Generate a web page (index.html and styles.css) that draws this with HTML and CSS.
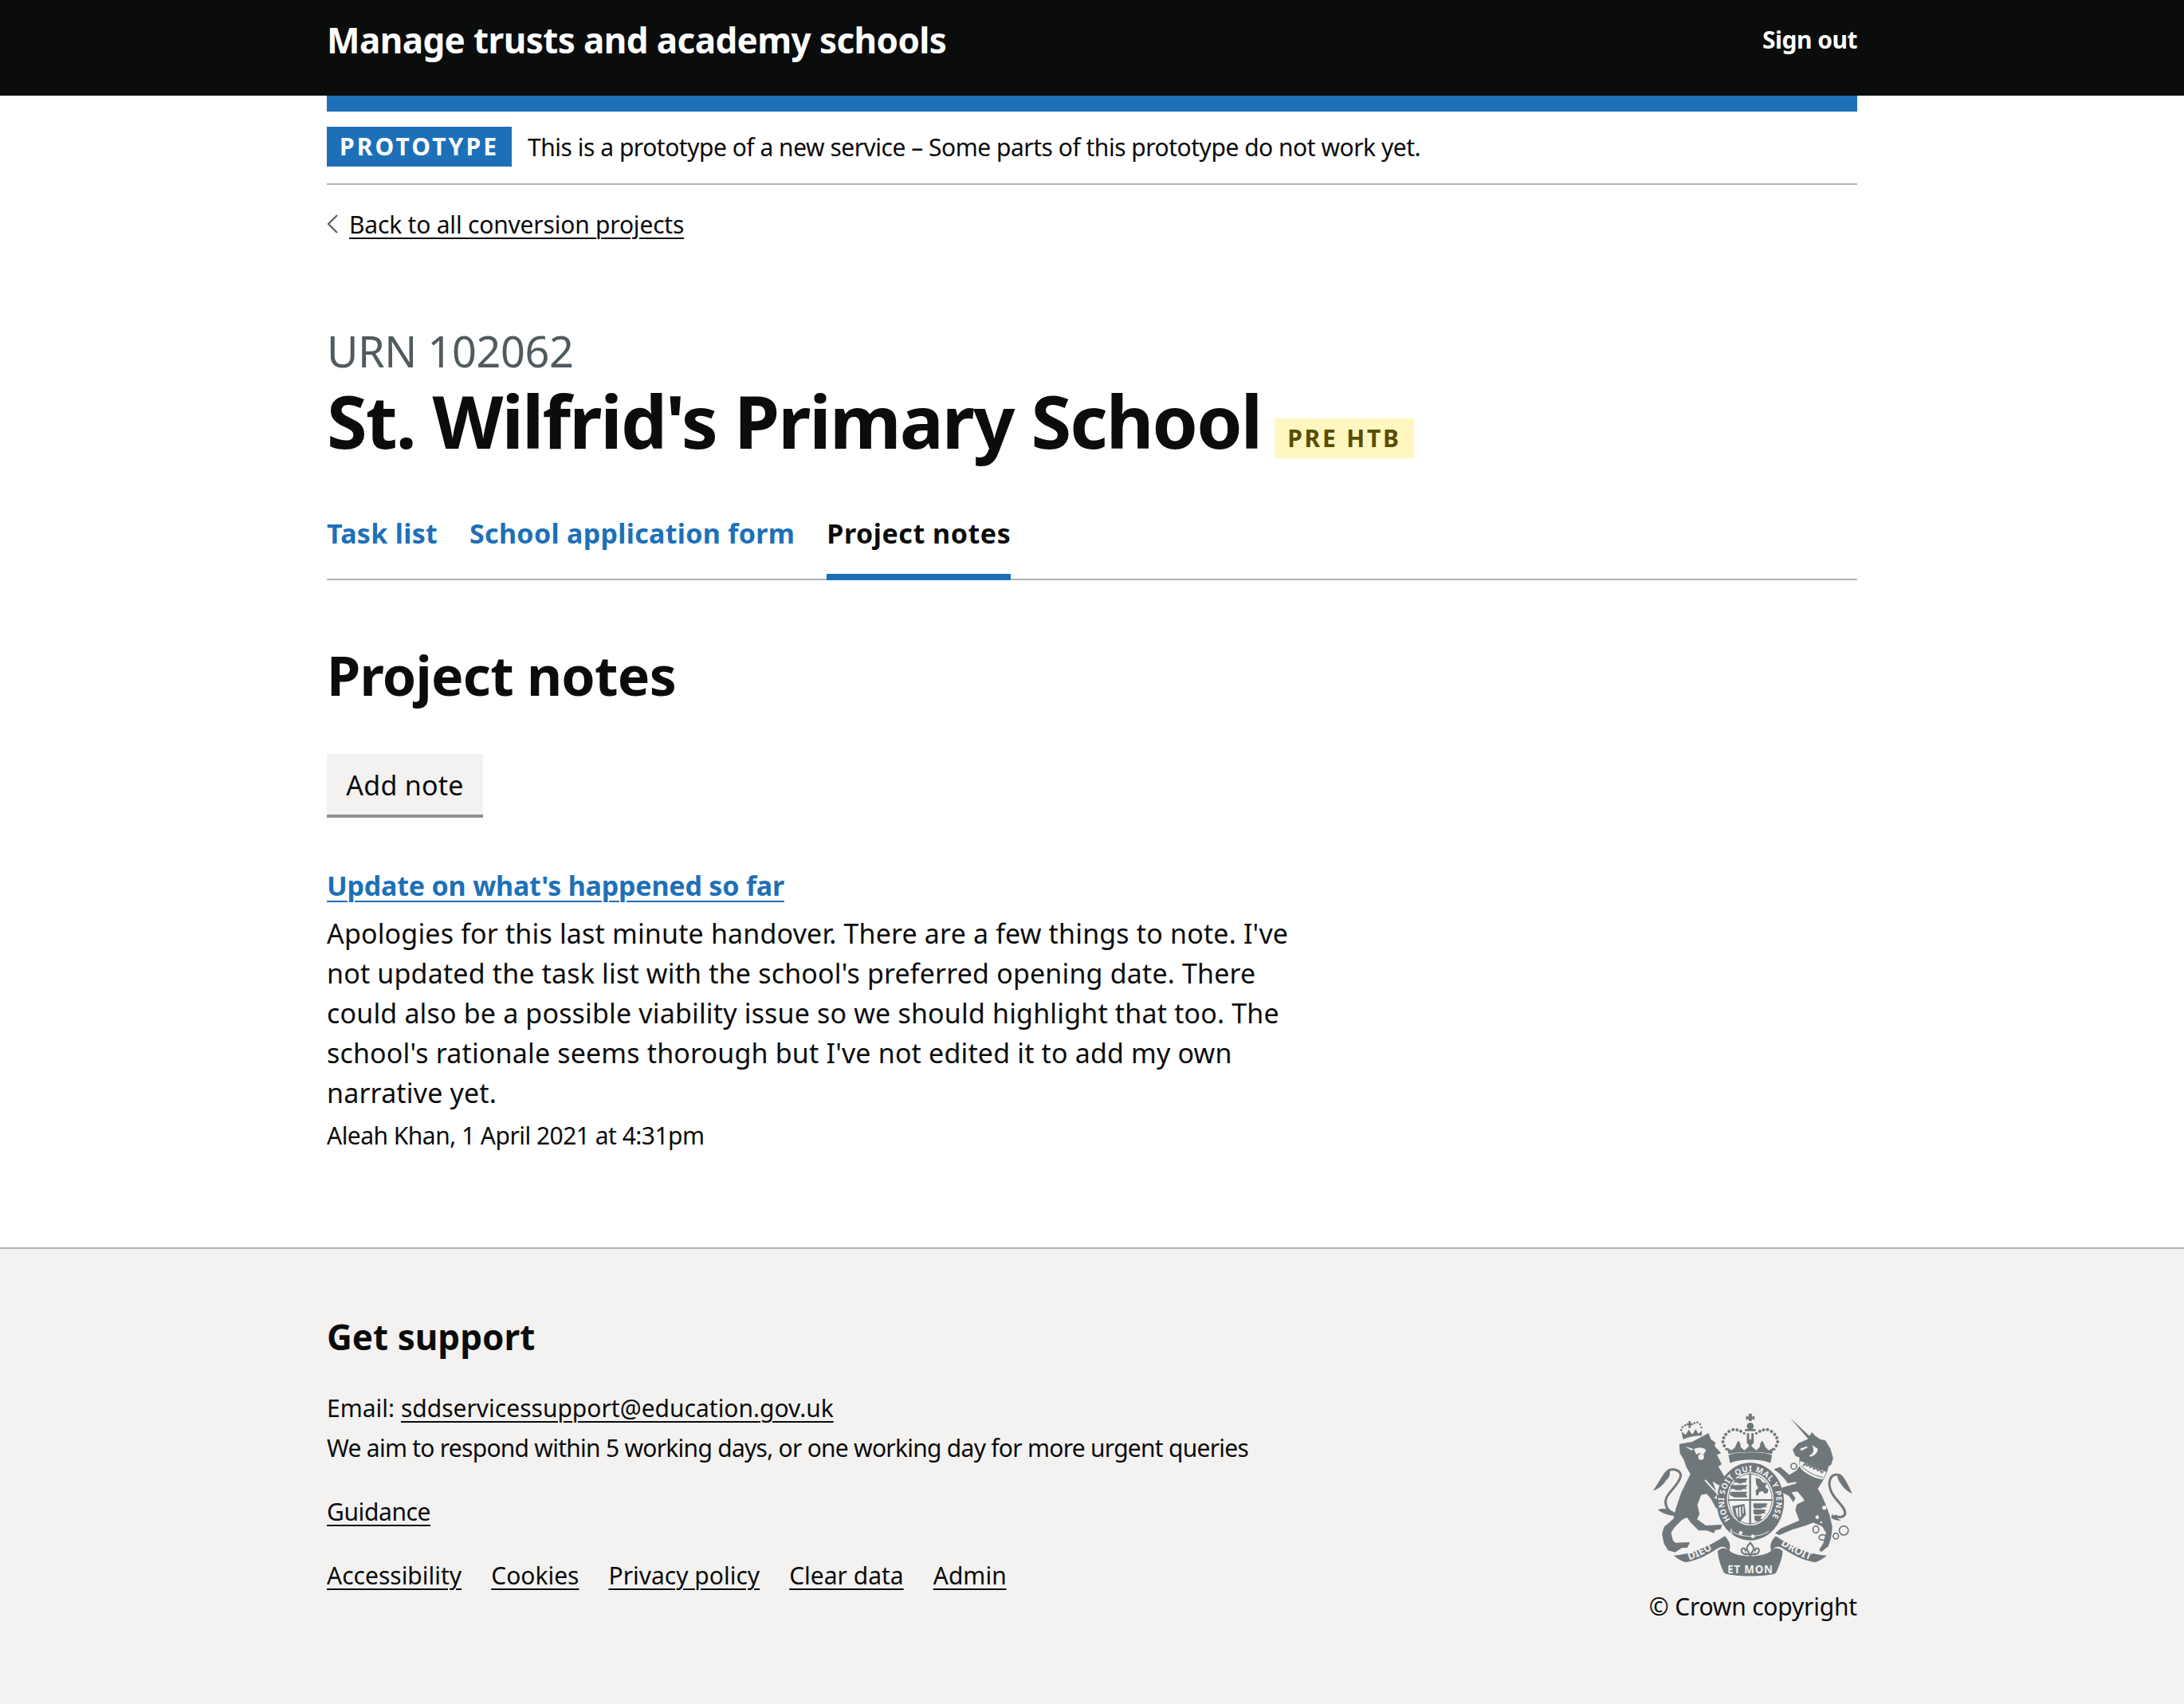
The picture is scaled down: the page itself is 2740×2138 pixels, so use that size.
FILE: index.html
```html
<!DOCTYPE html>
<html lang="en">
<head>
<meta charset="utf-8">
<title>Project notes</title>
<link rel="stylesheet" href="styles.css">
</head>
<body>
<header class="site-header">
  <div class="container header-inner">
    <a class="service-name" href="#">Manage trusts and academy schools</a>
    <a class="sign-out" href="#">Sign out</a>
  </div>
</header>
<div class="container">
  <div class="blue-bar"></div>
  <div class="phase-banner">
    <strong class="phase-tag">PROTOTYPE</strong>
    <span class="phase-text">This is a prototype of a new service – Some parts of this prototype do not work yet.</span>
  </div>
  <a class="back-link" href="#">
    <svg class="back-chevron" viewBox="0 0 14 24" width="14" height="24"><path d="M13 1 L2 12 L13 23" fill="none" stroke="#505a5f" stroke-width="2"/></svg>
    <span class="back-text">Back to all conversion projects</span>
  </a>
  <main>
    <p class="urn">URN 102062</p>
    <div class="title-row">
      <h1 class="school">St. Wilfrid's Primary School</h1>
      <strong class="stage-tag">PRE HTB</strong>
    </div>
    <nav class="tabs">
      <a class="tab" href="#">Task list</a>
      <a class="tab" href="#">School application form</a>
      <a class="tab tab-current" href="#">Project notes</a>
    </nav>
    <h2 class="section-title">Project notes</h2>
    <a class="button" href="#">Add note</a>
    <article class="note">
      <h3 class="note-title"><a href="#">Update on what's happened so far</a></h3>
      <p class="note-body">Apologies for this last minute handover. There are a few things to note. I've not updated the task list with the school's preferred opening date. There could also be a possible viability issue so we should highlight that too. The school's rationale seems thorough but I've not edited it to add my own narrative yet.</p>
      <p class="note-meta">Aleah Khan, 1 April 2021 at 4:31pm</p>
    </article>
  </main>
</div>
<footer class="footer">
  <div class="container footer-inner">
    <div class="footer-main">
      <h2 class="footer-title">Get support</h2>
      <p class="footer-line">Email: <a href="#">sddservicessupport@education.gov.uk</a></p>
      <p class="footer-line footer-line-tight">We aim to respond within 5 working days, or one working day for more urgent queries</p>
      <p class="footer-guidance"><a href="#">Guidance</a></p>
      <ul class="footer-links">
        <li><a href="#">Accessibility</a></li>
        <li><a href="#">Cookies</a></li>
        <li><a href="#">Privacy policy</a></li>
        <li><a href="#">Clear data</a></li>
        <li><a href="#">Admin</a></li>
      </ul>
    </div>
    <div class="footer-crest">
      <svg class="crest" viewBox="100 70 755 615" width="252" height="205" role="img" aria-label="Royal coat of arms">
        <g fill="#6f777b">
          <!-- royal crown -->
          <path d="M462 72h12v12l10-4v16l-10-4v8h-12v-8l-10 4v-16l10 4z"/>
          <path d="M468 106a13 13 0 0 1 0 26a13 13 0 0 1 0-26z"/>
          <path d="M448 130h40v8h-40z"/>
          <path d="M455 146h9v38h-9zM472 146h9v38h-9z"/>
          <path d="M386 228c20-8 50-10 82-10s62 2 82 10l-6 30c-20-8-46-10-76-10s-56 2-76 10z"/>
          <path d="M386 224l-6-24 18 10 12-10 12-26 12 26 12 10 22-20 22 20 12-10 12-26 12 26 12 10 18-10-6 24c-24-6-52-8-82-8s-58 2-82 8z"/>
          <path d="M468 166l12 16-12 18-12-18zM424 174l8 14-8 14-8-14zM512 174l8 14-8 14-8-14z"/>
          <circle cx="368" cy="163" r="6"/><circle cx="365" cy="178" r="6"/><circle cx="370" cy="193" r="6"/><circle cx="378" cy="206" r="5"/>
          <circle cx="376" cy="150" r="6"/><circle cx="388" cy="139" r="6"/><circle cx="403" cy="132" r="6"/><circle cx="418" cy="133" r="6"/><circle cx="432" cy="138" r="6"/><circle cx="445" cy="146" r="5"/>
          <circle cx="568" cy="163" r="6"/><circle cx="571" cy="178" r="6"/><circle cx="566" cy="193" r="6"/><circle cx="558" cy="206" r="5"/>
          <circle cx="560" cy="150" r="6"/><circle cx="548" cy="139" r="6"/><circle cx="533" cy="132" r="6"/><circle cx="518" cy="133" r="6"/><circle cx="504" cy="138" r="6"/><circle cx="491" cy="146" r="5"/>

          <!-- lion, drawn in its own crop coordinates -->
          <g transform="translate(60 30)">
            <path d="M155 139L149 110L165 122L176 102L190 120L203 100L212 118L226 106L226 125C200 125 175 130 155 139Z"/>
            <path d="M176 70h8v8h8v8h-8v10h-8v-10h-8v-8h8z"/>
            <circle cx="148" cy="104" r="4"/><circle cx="153" cy="93" r="4"/><circle cx="163" cy="86" r="4"/><circle cx="198" cy="78" r="4"/><circle cx="209" cy="75" r="4"/><circle cx="219" cy="82" r="4"/><circle cx="224" cy="94" r="4"/>
            <path class="crest-soft" d="M143 158L190 150L250 118L258 140L275 152L272 165L295 190L280 195L298 232L285 240L312 285L290 310L262 292L282 345L270 360L315 385L305 400L280 395L262 362L245 342L222 346L207 385L215 420L205 440L240 465L300 462L295 475L275 478L270 490L245 480L215 480L185 450L170 430L150 440L120 470L108 490L115 520L125 530L178 528L170 545L150 545L125 562L100 555L85 530L78 495L85 470L120 440L130 400L150 340L175 290L185 270L168 240L160 215L145 190Z"/>
            <path d="M122 418C95 408 84 385 92 360C100 335 140 310 146 278C148 258 125 248 102 255" fill="none" stroke="#6f777b" stroke-width="9"/>
            <path d="M102 250C78 264 66 300 42 332C62 326 80 312 92 292C104 284 110 266 102 250Z"/>
            <path d="M60 404C74 398 88 400 100 404L135 420L125 428C100 426 78 418 60 404Z"/>
          </g>

          <!-- unicorn, drawn in its own crop coordinates -->
          <g transform="translate(450 30)">
            <path d="M168 58L245 130L238 140Z"/>
            <path class="crest-soft" d="M180 178L200 155L235 140L250 115L262 128L280 140L300 145L318 175L328 210L320 235L312 238L305 262L292 290L270 325L285 350L300 385L315 425L325 470L320 510L310 540L285 560L280 555L295 530L305 490L290 465L255 450L230 460L180 475L128 497L115 492L135 475L170 460L205 445L190 405L195 385L225 370L215 355L190 325L195 290L190 265L205 238L205 205L190 200L185 190Z"/>
            <path class="crest-soft" d="M205 250L165 275L150 262L130 245L110 252L125 262L145 282L160 302L200 295Z"/>
            <path class="crest-soft" d="M198 305L140 322L135 335L165 350L180 372L186 360L168 336L205 332Z"/>
            <path d="M345 272C320 270 305 300 325 340C340 370 378 395 375 420C370 432 352 436 335 426" fill="none" stroke="#6f777b" stroke-width="9"/>
            <path d="M345 268C366 264 382 300 402 343C385 336 370 325 360 307C350 296 345 284 345 268Z"/>
            <path d="M326 420C336 428 346 436 360 444C346 446 332 442 322 434Z"/>
          </g>

          <!-- garter -->
          <ellipse cx="468" cy="403" rx="127" ry="146"/>

          <!-- scroll -->
          <path d="M180 606C235 605 310 575 372 533C388 548 398 570 388 590C375 570 362 570 348 578C315 600 270 625 225 632C205 625 190 615 180 606Z"/>
          <path d="M345 590C360 575 375 575 392 590C420 615 515 615 545 590C560 575 575 575 590 590C588 620 575 650 565 672C530 687 405 687 370 672C358 650 348 620 345 590Z"/>
          <path d="M756 606C701 605 626 575 564 533C548 548 538 570 548 590C561 570 574 570 588 578C621 600 666 625 711 632C731 625 746 615 756 606Z"/>
        </g>

        <!-- light details over the animals -->
        <g fill="#f3f2f1">
          <path d="M222 195L255 205L246 210Z"/>
          <path d="M256 206C270 196 295 198 302 210L292 226L276 220L265 226Z"/>
          <circle cx="283" cy="235" r="11"/>
          <circle cx="755" cy="380" r="9"/><circle cx="747" cy="426" r="8"/><circle cx="720" cy="462" r="7"/><circle cx="735" cy="481" r="4"/>
          <path d="M655 204L680 195L684 200L660 212Z"/>
          <path d="M700 190L722 204C722 218 712 230 694 234L690 230C704 224 712 212 700 190Z"/>
          <path d="M657 250L755 292L742 320C705 315 670 295 652 270Z"/>
          <path d="M300 320L350 375L346 379L296 324Z"/>
        </g>
        <path d="M667 268l8-8 6 8 8-4 5 10 9-6 5 12 9-5 5 11 9-4 5 11 8-3" fill="none" stroke="#6f777b" stroke-width="6"/>
        <path d="M658 268C690 296 712 306 742 312" fill="none" stroke="#6f777b" stroke-width="3"/>

        <!-- shield -->
        <path d="M396 262C430 246 506 246 540 262" fill="none" stroke="#f3f2f1" stroke-width="9"/>
        <ellipse cx="468" cy="393" rx="88" ry="100" fill="#f3f2f1"/>
        <ellipse cx="468" cy="393" rx="82" ry="94" fill="none" stroke="#6f777b" stroke-width="3"/>
        <g fill="#6f777b">
          <rect x="464" y="297" width="7" height="192"/>
          <rect x="384" y="394" width="168" height="6"/>
          <path d="M408 316h48v5l-6 4 6 6h-14l-6 4h-12l-6-4h-10zM394 341h62v5l-6 4 6 6h-16l-6 4h-20l-6-4h-14zM392 366h64v5l-6 4 6 6v6h-48l-8-4-8-4z"/>
          <path d="M488 314l18 4 8 12 16 4-6 14 12 10-2 12-12 4-6-10-14 2-4 14h-8l-2-18 10-10-8-16z"/>
          <path d="M400 420l46-8 6 40-24 28c-14-12-26-36-28-60zM412 428l6 30 4 6 0-38zM426 424l2 40 6-6-2-36zM438 422l2 28 4-4-2-26z" fill-rule="evenodd"/>
          <path d="M480 410h52v5l-6 4 6 6h-16l-6 4h-24l-6-4zM480 433h46v5l-6 4 6 6h-14l-6 4h-20l-6-4zM484 456h28v5l-6 4 6 6-12 6h-10l-6-4z"/>
        </g>
        <path d="M398 514C430 540 506 540 538 514" fill="none" stroke="#f3f2f1" stroke-width="3"/>
        <circle cx="432" cy="521" r="7" fill="#f3f2f1"/>
        <circle cx="478" cy="534" r="7" fill="#f3f2f1"/>
        <path d="M398 505C392 514 394 526 404 530" fill="none" stroke="#f3f2f1" stroke-width="4"/>

        <!-- rings and fleur -->
        <g fill="none" stroke="#6f777b" stroke-width="5">
          <ellipse cx="715" cy="508" rx="11" ry="13"/>
          <ellipse cx="740" cy="538" rx="13" ry="10"/>
          <ellipse cx="790" cy="533" rx="10" ry="11"/>
          <circle cx="820" cy="512" r="17"/>
          <circle cx="632" cy="270" r="11"/>
          <circle cx="622" cy="356" r="11"/>
          <path stroke-width="6" d="M468 558c-7 9-13 14-13 22s8 12 13 28c5-16 13-20 13-28s-6-13-13-22zM455 598c-16 7-24-8-18-17 8-6 16 2 12 10M481 598c16 7 24-8 18-17-8-6-16 2-12 10M446 602h44M468 610v20"/>
        </g>

        <!-- mottoes -->
        <path id="arc-garter" d="M393 471A98 110 0 1 1 543 471" fill="none"/>
        <path id="scroll-left" d="M238 624C275 612 310 592 345 570" fill="none"/>
        <path id="scroll-right" d="M582 566C620 590 660 612 702 626" fill="none"/>
        <text class="crest-text garter-text"><textPath href="#arc-garter" textLength="466">HONI SOIT QUI MAL Y PENSE</textPath></text>
        <text class="crest-text"><textPath href="#scroll-left">DIEU</textPath></text>
        <text class="crest-text"><textPath href="#scroll-right">DROIT</textPath></text>
        <text class="crest-text" x="382" y="674" textLength="170">ET MON</text>
      </svg>
      <p class="copyright">© Crown copyright</p>
    </div>
  </div>
</footer>
</body>
</html>
```
FILE: styles.css
```css
* { box-sizing: border-box; }
html, body { margin: 0; padding: 0; }
body {
  font-family: "Noto Sans", "Liberation Sans", sans-serif;
  color: #0b0c0c;
  background: #fff;
  min-height: 2138px;
  display: flex;
  flex-direction: column;
}
p, h1, h2, h3, ul { margin: 0; padding: 0; }
a { color: inherit; text-decoration-thickness: 2px; }
.container { width: 1920px; margin: 0 auto; }

.site-header { background: #0b0c0c; height: 120px; color: #fff; }
.header-inner { display: flex; justify-content: space-between; align-items: flex-start; height: 100%; }
.service-name { font-size: 44px; line-height: 100px; font-weight: 700; text-decoration: none; letter-spacing: -0.6px; }
.sign-out { font-size: 30px; line-height: 100px; font-weight: 700; text-decoration: none; letter-spacing: -0.5px; }

.blue-bar { height: 20px; background: #1d70b8; }
.phase-banner { display: flex; align-items: center; height: 92px; padding-bottom: 2px; border-bottom: 2px solid #b1b4b6; gap: 20px; }
.phase-tag { background: #1d70b8; color: #fff; height: 50px; line-height: 50px; padding: 0 16px; font-size: 30px; letter-spacing: 3.1px; font-weight: 700; }
.phase-text { font-size: 30px; letter-spacing: -0.49px; }

.back-link { display: flex; align-items: center; gap: 14px; margin-top: 29px; height: 40px; text-decoration: none; }
.back-chevron { display: block; }
.back-text { font-size: 30px; letter-spacing: -0.2px; text-decoration: underline; text-decoration-thickness: 2px; text-underline-offset: 5px; }

.urn { margin-top: 107px; font-size: 54px; line-height: 64px; color: #505a5f; letter-spacing: -0.4px; }
.title-row { display: flex; align-items: flex-end; gap: 17px; margin-top: 6px; }
.school { font-size: 92px; line-height: 100px; font-weight: 700; letter-spacing: -1.96px; }
.stage-tag { background: #fff7bf; color: #594d00; height: 50px; line-height: 50px; padding: 0 16px; font-size: 30px; letter-spacing: 2.8px; margin-bottom: 3px; }

.tabs { display: flex; gap: 40px; margin-top: 61px; height: 89px; border-bottom: 2px solid #b1b4b6; }
.tab { font-size: 34px; line-height: 60px; font-weight: 700; color: #1d70b8; text-decoration: none; letter-spacing: 0.3px; height: 89px; }
.tab-current { color: #0b0c0c; border-bottom: 8px solid #1d70b8; letter-spacing: 0.55px; }

.section-title { margin-top: 74px; font-size: 68px; line-height: 90px; font-weight: 700; letter-spacing: -0.75px; }
.button { display: inline-block; margin-top: 54px; width: 196px; height: 76px; background: #f3f2f1; box-shadow: 0 4px 0 #929191; font-size: 34px; line-height: 78px; text-align: center; text-decoration: none; letter-spacing: 0.25px; }

.note { margin-top: 64px; width: 1240px; }
.note-title { font-size: 34px; line-height: 50px; font-weight: 700; color: #1d70b8; letter-spacing: -0.2px; }
.note-title a { text-underline-offset: 6px; }
.note-body { margin-top: 10px; font-size: 34px; line-height: 50px; letter-spacing: 0.16px; }
.note-meta { margin-top: 4px; font-size: 30px; line-height: 50px; letter-spacing: -0.53px; }

.footer { flex: 1; margin-top: 115px; background: #f3f2f1; border-top: 2px solid #b1b4b6; }
.footer-inner { display: flex; justify-content: space-between; align-items: flex-start; }
.footer-main { padding-top: 77px; }
.footer-title { font-size: 44px; line-height: 66px; font-weight: 700; }
.footer-line { font-size: 30px; line-height: 50px; }
.footer-line-tight { letter-spacing: -0.74px; }
.footer-title + .footer-line { margin-top: 32px; }
.footer-line a, .footer-guidance a, .footer-links a { text-underline-offset: 5px; }
.footer-guidance { margin-top: 30px; font-size: 30px; line-height: 50px; letter-spacing: -0.4px; }
.footer-links { display: flex; gap: 37px; margin-top: 30px; list-style: none; font-size: 30px; line-height: 50px; }

.footer-crest { padding-top: 206px; display: flex; flex-direction: column; align-items: flex-end; }
.crest { display: block; margin-right: 5px; }
.crest-soft { stroke: #6f777b; stroke-width: 4px; stroke-linejoin: round; }
.copyright { margin-top: 13px; font-size: 30px; line-height: 50px; letter-spacing: -0.2px; }
.crest-text { font-family: "Noto Sans", sans-serif; font-size: 40px; font-weight: 700; fill: #f3f2f1; }
.garter-text { font-size: 30px; }
```
